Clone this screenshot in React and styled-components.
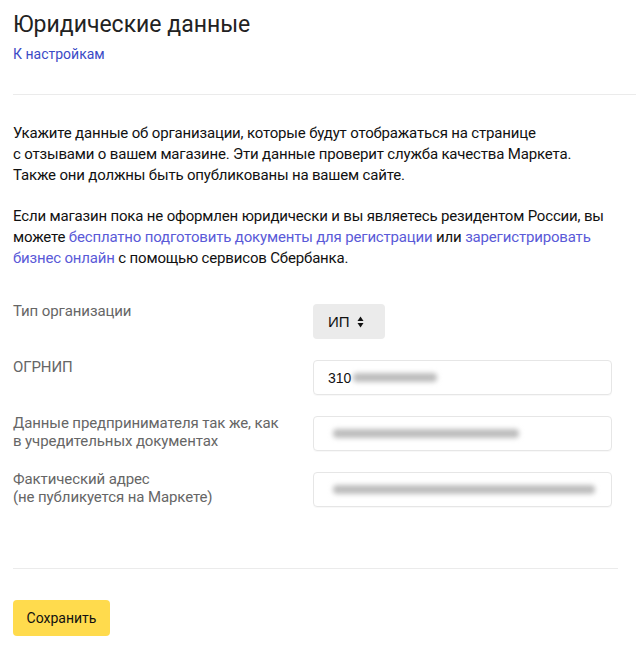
import React from 'react';
import styled, { createGlobalStyle } from 'styled-components';

const GlobalStyle = createGlobalStyle`
  html, body {
    margin: 0;
    padding: 0;
    background: #fff;
  }
  body {
    font-family: Roboto, "Noto Sans", "Liberation Sans", sans-serif;
    color: #000;
  }
`;

const Page = styled.div`
  width: 636px;
  padding: 10px 0 14px 13px;
  box-sizing: border-box;
`;

const Title = styled.h1`
  margin: 0;
  font-size: 23px;
  line-height: 30px;
  font-weight: 400;
  color: #222;
`;

const BackLink = styled.a`
  display: inline-block;
  margin-top: 5px;
  font-size: 14px;
  line-height: 18px;
  color: #3b4bc6;
  text-decoration: none;
`;

const Divider = styled.hr`
  margin: ${p => p.$top}px ${p => p.$right}px 0 0;
  border: 0;
  border-top: 1px solid #ebebeb;
`;

const Text = styled.p`
  margin: ${p => p.$top}px 0 0;
  font-size: 15px;
  line-height: 21px;
  letter-spacing: -0.17px;
  color: #111;
  white-space: nowrap;
`;

const Link = styled.a`
  color: #5a5ad8;
  text-decoration: none;
`;

const Form = styled.div`
  display: flex;
  flex-direction: column;
  gap: 21px;
  margin-top: 35px;
`;

const Row = styled.div`
  display: grid;
  grid-template-columns: 300px 299px;
  align-items: start;
`;

const Label = styled.div`
  margin-top: -2px;
  font-size: 15px;
  line-height: 18px;
  letter-spacing: -0.1px;
  color: #666;
`;

const Select = styled.div`
  justify-self: start;
  display: flex;
  align-items: center;
  gap: 7px;
  height: 35px;
  padding: 0 21px 0 15px;
  border-radius: 4px;
  background: #ebebeb;
  font-family: "Liberation Sans", Arial, sans-serif;
  font-size: 15px;
  color: #111;
`;

const Input = styled.div`
  display: flex;
  align-items: center;
  height: 35px;
  padding: 0 14px;
  box-sizing: border-box;
  border: 1px solid #e6e6e6;
  border-radius: 4px;
  box-shadow: 0 1px 1px rgba(0, 0, 0, 0.03);
  font-family: "Liberation Sans", Arial, sans-serif;
  font-size: 14px;
  color: #111;
  overflow: hidden;
  white-space: nowrap;
`;

const Hidden = styled.span`
  display: inline-block;
  width: ${p => p.$width}px;
  height: 9px;
  margin-left: ${p => p.$gap}px;
  border-radius: 4px;
  background: #bdbdbd;
  filter: blur(2.5px);
`;

const Button = styled.button`
  width: 97px;
  height: 36px;
  margin-top: 31px;
  border: 0;
  border-radius: 4px;
  background: #ffdb4d;
  font-family: Roboto, "Noto Sans", sans-serif;
  font-size: 14px;
  color: #111;
  cursor: pointer;
`;

const Arrows = () => (
  <svg width="7" height="12" viewBox="0 0 7 12">
    <path d="M3.5 0.5 L6.5 5 H0.5 Z" fill="#111" />
    <path d="M3.5 11.5 L6.5 7 H0.5 Z" fill="#111" />
  </svg>
);

export default function App() {
  return (
    <Page>
      <GlobalStyle />
      <Title>Юридические данные</Title>
      <BackLink href="#">К настройкам</BackLink>
      <Divider $top={31} $right={0} />

      <Text $top={28}>
        Укажите данные об организации, которые будут отображаться на странице
        <br />с отзывами о вашем магазине. Эти данные проверит служба качества Маркета.
        <br />Также они должны быть опубликованы на вашем сайте.
      </Text>
      <Text $top={20}>
        Если магазин пока не оформлен юридически и вы являетесь резидентом России, вы
        <br />можете <Link href="#">бесплатно подготовить документы для регистрации</Link> или{' '}
        <Link href="#">зарегистрировать</Link>
        <br />
        <Link href="#">бизнес онлайн</Link> с помощью сервисов Сбербанка.
      </Text>

      <Form>
        <Row>
          <Label>Тип организации</Label>
          <Select>
            ИП <Arrows />
          </Select>
        </Row>
        <Row>
          <Label>ОГРНИП</Label>
          <Input>
            310
            <Hidden $width={84} $gap={2} />
          </Input>
        </Row>
        <Row>
          <Label>
            Данные предпринимателя так же, как
            <br />в учредительных документах
          </Label>
          <Input>
            <Hidden $width={186} $gap={5} />
          </Input>
        </Row>
        <Row>
          <Label>
            Фактический адрес
            <br />
            (не публикуется на Маркете)
          </Label>
          <Input>
            <Hidden $width={262} $gap={5} />
          </Input>
        </Row>
      </Form>

      <Divider $top={61} $right={18} />
      <Button>Сохранить</Button>
    </Page>
  );
}
